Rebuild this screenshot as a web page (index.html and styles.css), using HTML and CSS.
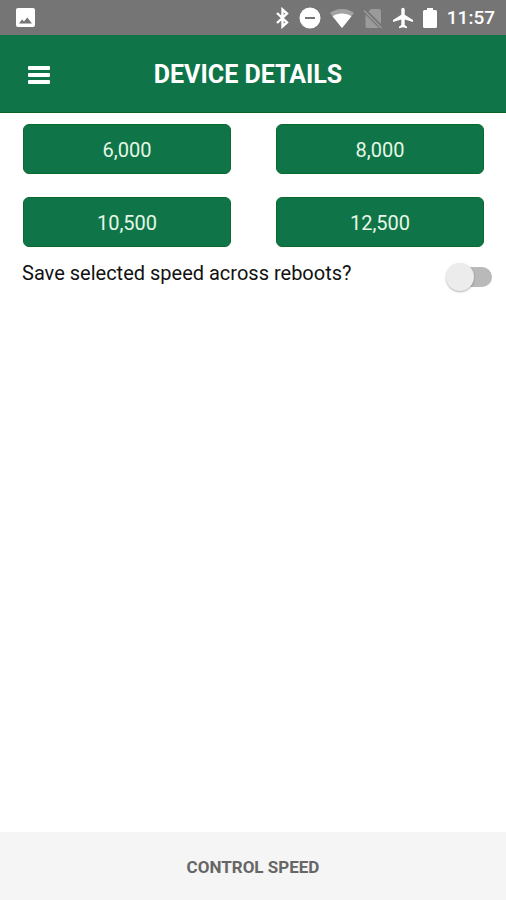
FILE: index.html
```html
<!DOCTYPE html>
<html lang="en">
<head>
<meta charset="utf-8">
<meta name="viewport" content="width=device-width, initial-scale=1">
<title>Device Details</title>
<link rel="stylesheet" href="styles.css">
</head>
<body>
<div class="status">
  <svg class="photo" width="20" height="20" viewBox="0 0 20 20" aria-hidden="true"><rect x="1" y="0" width="19" height="19" rx="2" fill="#fff"/><path d="M4 15.500 7 11.500 9 13.500 12.300 9.500 17 15.500Z" fill="#757575"/></svg>
  <div class="status-icons">
    <svg width="14" height="22" viewBox="0 0 14 22" fill="none" stroke="#fff" stroke-width="2.400" aria-hidden="true"><path d="M1 6 11 15.500 6.500 19.500V2.500L11 6.500 1 16"/></svg>
    <svg width="22" height="22" viewBox="0 0 22 22" aria-hidden="true"><circle cx="11" cy="11" r="10.500" fill="#fff"/><path d="M6 11H16" stroke="#757575" stroke-width="2"/></svg>
    <svg width="24" height="22" viewBox="0 0 24 22" aria-hidden="true"><path d="M0 6C7 .5 17 .5 24 6L12 21Z" fill="#a3a3a3"/><path d="M2.500 9.200C8 5.500 16 5.500 21.500 9.200L12 21Z" fill="#fff"/></svg>
    <svg width="20" height="22" viewBox="0 0 20 22" aria-hidden="true"><path d="M8 2H16Q18 2 18 4V17L5.500 4.500ZM2.500 7.500 16 21H4Q2.500 21 2.500 19Z" fill="#9b9b9b"/><path d="M1 3.500 18.500 21" stroke="#9b9b9b" stroke-width="1.500"/></svg>
    <svg width="22" height="22" viewBox="0 0 22 22" aria-hidden="true"><path d="M21 15V13L12.700 7.800V2.500A1.700 1.700 0 0 0 9.300 2.500V7.800L1 13V15L9.300 12.500V18L7 19.700V21.300L11 20.200 15 21.300V19.700L12.700 18V12.500Z" fill="#fff"/></svg>
    <svg width="14" height="22" viewBox="0 0 14 22" aria-hidden="true"><path d="M4 1H10V3H12.500Q14 3 14 4.500V19.500Q14 21 12.500 21H1.500Q0 21 0 19.500V4.500Q0 3 1.500 3H4Z" fill="#fff"/></svg>
  </div>
  <time class="clock">11:57</time>
</div>
<header class="header">
  <button class="menu" type="button" aria-label="Menu">
    <svg width="22" height="20" viewBox="0 0 22 20" fill="#fff" aria-hidden="true"><rect y="1" width="22" height="4" rx="1"/><rect y="8" width="22" height="4" rx="1"/><rect y="15" width="22" height="4" rx="1"/></svg>
  </button>
  <h1 class="title">DEVICE DETAILS</h1>
</header>
<main class="main">
  <div class="speeds">
    <button class="speed" type="button">6,000</button>
    <button class="speed" type="button">8,000</button>
    <button class="speed" type="button">10,500</button>
    <button class="speed" type="button">12,500</button>
  </div>
  <div class="setting">
    <label class="label" for="save">Save selected speed across reboots?</label>
    <input class="switch" id="save" type="checkbox" role="switch">
  </div>
</main>
<footer class="footer">
  <button class="tab" type="button">CONTROL SPEED</button>
</footer>
</body>
</html>
```
FILE: styles.css
```css
* {
  box-sizing: border-box;
}

body {
  margin: 0;
  min-height: 100vh;
  display: flex;
  flex-direction: column;
  background: #fff;
  color: #111;
  font-family: Roboto, "Liberation Sans", sans-serif;
}

button {
  border: 0;
  padding: 0;
  font: inherit;
  cursor: pointer;
}

svg {
  display: block;
}

.status {
  display: flex;
  align-items: center;
  height: 35px;
  padding: 0 11px 0 15px;
  background: #757575;
  color: #fff;
}

.status-icons {
  display: flex;
  gap: 9px;
  margin-left: auto;
}

.clock {
  margin-left: 10px;
  font-size: 19px;
  font-weight: 500;
  line-height: 24px;
}

.header {
  display: grid;
  grid-template-columns: 78px 1fr 88px;
  align-items: center;
  height: 78px;
  padding-top: 2px;
  background: #0f7548;
  border-bottom: 1px solid #0a6420;
  color: #fff;
}

.menu {
  display: grid;
  place-items: center;
  height: 48px;
  background: none;
}

.title {
  margin: 0;
  text-align: center;
  font-size: 25px;
  font-weight: 700;
  line-height: 32px;
}

.main {
  flex: 1;
}

.speeds {
  display: grid;
  grid-template-columns: 1fr 1fr;
  gap: 23px 45px;
  padding: 11px 22px 0 23px;
}

.speed {
  height: 50px;
  padding-top: 2px;
  border: 1px solid #0a6a2c;
  border-radius: 6px;
  background: #0f7548;
  color: #e6f7e6;
  font-size: 20px;
}

.setting {
  display: flex;
  align-items: flex-start;
  justify-content: space-between;
  padding: 14px 14px 0 22px;
}

.label {
  font-size: 20px;
  line-height: 24px;
}

.switch {
  appearance: none;
  display: grid;
  grid-template-columns: 1fr;
  align-items: center;
  width: 46px;
  height: 32px;
  margin: 0;
  cursor: pointer;
}

.switch::before,
.switch::after {
  content: "";
  grid-area: 1 / 1;
}

.switch::before {
  justify-self: end;
  width: 36px;
  height: 20px;
  border-radius: 10px;
  background: #b9b9b9;
}

.switch::after {
  width: 28px;
  height: 28px;
  border-radius: 50%;
  background: #ececec;
  box-shadow: 0 1px 2px rgba(0, 0, 0, 0.3);
}

.switch:checked::after {
  justify-self: end;
}

.footer {
  display: grid;
  height: 68px;
  background: #f5f5f5;
}

.tab {
  padding-top: 2px;
  background: none;
  color: #666;
  font-size: 17px;
  font-weight: 700;
}
```
